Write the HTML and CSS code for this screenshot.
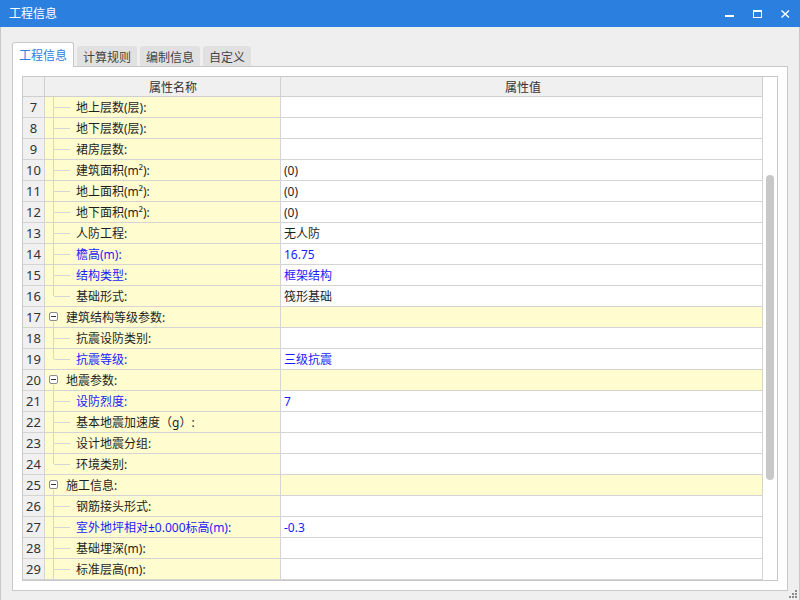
FILE: index.html
```html
<!DOCTYPE html>
<html lang="zh">
<head>
<meta charset="utf-8">
<link rel="stylesheet" href="styles.css">
</head>
<body>
<div class="window">
  <div class="titlebar">
    <span class="title">工程信息</span>
    <div class="controls">
      <span class="ctl"><svg width="10" height="8" viewBox="0 0 10 8"><rect x="0" y="5" width="9" height="2" fill="#fff"/></svg></span>
      <span class="ctl"><svg width="10" height="8" viewBox="0 0 10 8"><rect x="0.5" y="0.5" width="8" height="7" fill="none" stroke="#fff"/><rect x="0" y="0" width="9" height="2" fill="#fff"/></svg></span>
      <span class="ctl"><svg width="10" height="8" viewBox="0 0 10 8"><path d="M0.5 0.5 L8 7.5 M8 0.5 L0.5 7.5" stroke="#fff" stroke-width="1.4" fill="none"/></svg></span>
    </div>
  </div>
  <div class="client">
    <div class="tabs">
      <div class="tab active">工程信息</div>
      <div class="tab w60">计算规则</div>
      <div class="tab w60">编制信息</div>
      <div class="tab w48">自定义</div>
    </div>
    <div class="panel">
      <div class="grid">
        <div class="table">
          <div class="row head">
            <div class="num"></div>
            <div class="name">属性名称</div>
            <div class="val">属性值</div>
          </div>
          <div class="row"><div class="num">7</div><div class="name child">地上层数(层):</div><div class="val"></div></div>
          <div class="row"><div class="num">8</div><div class="name child">地下层数(层):</div><div class="val"></div></div>
          <div class="row"><div class="num">9</div><div class="name child">裙房层数:</div><div class="val"></div></div>
          <div class="row"><div class="num">10</div><div class="name child">建筑面积(m²):</div><div class="val">(0)</div></div>
          <div class="row"><div class="num">11</div><div class="name child">地上面积(m²):</div><div class="val">(0)</div></div>
          <div class="row"><div class="num">12</div><div class="name child">地下面积(m²):</div><div class="val">(0)</div></div>
          <div class="row"><div class="num">13</div><div class="name child">人防工程:</div><div class="val">无人防</div></div>
          <div class="row"><div class="num">14</div><div class="name child blue">檐高(m):</div><div class="val blue">16.75</div></div>
          <div class="row"><div class="num">15</div><div class="name child blue">结构类型:</div><div class="val blue">框架结构</div></div>
          <div class="row"><div class="num">16</div><div class="name child last">基础形式:</div><div class="val">筏形基础</div></div>
          <div class="row group"><div class="num">17</div><div class="name"><span class="box"></span>建筑结构等级参数:</div><div class="val"></div></div>
          <div class="row"><div class="num">18</div><div class="name child">抗震设防类别:</div><div class="val"></div></div>
          <div class="row"><div class="num">19</div><div class="name child last blue">抗震等级:</div><div class="val blue">三级抗震</div></div>
          <div class="row group"><div class="num">20</div><div class="name"><span class="box"></span>地震参数:</div><div class="val"></div></div>
          <div class="row"><div class="num">21</div><div class="name child blue">设防烈度:</div><div class="val blue">7</div></div>
          <div class="row"><div class="num">22</div><div class="name child">基本地震加速度（g）:</div><div class="val"></div></div>
          <div class="row"><div class="num">23</div><div class="name child">设计地震分组:</div><div class="val"></div></div>
          <div class="row"><div class="num">24</div><div class="name child last">环境类别:</div><div class="val"></div></div>
          <div class="row group"><div class="num">25</div><div class="name"><span class="box"></span>施工信息:</div><div class="val"></div></div>
          <div class="row"><div class="num">26</div><div class="name child">钢筋接头形式:</div><div class="val"></div></div>
          <div class="row"><div class="num">27</div><div class="name child blue">室外地坪相对±0.000标高(m):</div><div class="val blue">-0.3</div></div>
          <div class="row"><div class="num">28</div><div class="name child">基础埋深(m):</div><div class="val"></div></div>
          <div class="row"><div class="num">29</div><div class="name child">标准层高(m):</div><div class="val"></div></div>
        </div>
        <div class="scroll"><div class="thumb"></div></div>
      </div>
    </div>
  </div>
  <svg class="grip" width="10" height="10" viewBox="0 0 10 10">
    <rect x="7" y="1" width="2" height="2" fill="#8a8a8a"/>
    <rect x="4" y="4" width="2" height="2" fill="#8a8a8a"/>
    <rect x="7" y="4" width="2" height="2" fill="#8a8a8a"/>
    <rect x="1" y="7" width="2" height="2" fill="#8a8a8a"/>
    <rect x="4" y="7" width="2" height="2" fill="#8a8a8a"/>
    <rect x="7" y="7" width="2" height="2" fill="#8a8a8a"/>
  </svg>
</div>
</body>
</html>
```
FILE: styles.css
```css
* { box-sizing: border-box; }
body { margin: 0; background: #efefef; }
.window {
  position: relative;
  width: 800px;
  height: 600px;
  display: flex;
  flex-direction: column;
  font-family: "Noto Sans", "Noto Sans CJK SC", sans-serif;
  font-size: 12px;
  color: #1e1e1e;
  background: #efefef;
}
.titlebar {
  height: 27px;
  flex: none;
  background: #2b80df;
  display: flex;
  align-items: center;
  justify-content: space-between;
  padding-left: 9px;
}
.title { color: #fff; font-size: 12px; line-height: 16px; }
.controls { display: flex; height: 27px; }
.ctl {
  width: 28px;
  height: 27px;
  display: flex;
  align-items: center;
  justify-content: center;
}
.client {
  flex: 1;
  display: flex;
  flex-direction: column;
  border: 1px solid #c6c9cc;
  border-top: 0;
  padding: 15px 11px 11px 11px;
}
.tabs {
  height: 24px;
  flex: none;
  display: flex;
  align-items: flex-end;
  gap: 3px;
  position: relative;
  z-index: 1;
}
.tab {
  height: 20px;
  background: #e1e1e1;
  color: #444;
  border-radius: 3px 3px 0 0;
  display: flex;
  align-items: center;
  justify-content: center;
  font-size: 12px;
  padding-top: 2px;
}
.tab.active {
  width: 62px;
  height: 25px;
  margin-bottom: -1px;
  background: #fff;
  color: #2b80df;
  border: 1px solid #c8c8c8;
  border-bottom: 0;
  padding-top: 0;
  padding-bottom: 1px;
}
.w60 { width: 60px; }
.w48 { width: 48px; }
.panel {
  flex: 1;
  background: #fff;
  border: 1px solid #c8c8c8;
  padding: 9px;
  display: flex;
}
.grid {
  flex: 1;
  border: 1px solid #c8c8c8;
  display: flex;
  overflow: hidden;
}
.table {
  width: 740px;
  flex: none;
  overflow: hidden;
}
.row {
  display: grid;
  grid-template-columns: 22px 236px 482px;
  height: 21px;
}
.row > div {
  border-right: 1px solid #d4d4d4;
  border-bottom: 1px solid #d4d4d4;
  display: flex;
  align-items: center;
  white-space: nowrap;
}
.row.head { height: 20px; }
.row.head > div {
  background: #f0f0f0;
  justify-content: center;
  color: #333;
  border-color: #cfcfcf;
}
.num {
  background: #f0f0f0;
  justify-content: center;
  color: #333;
  font-size: 13px;
}
.name {
  background: #fffcd0;
  position: relative;
  padding-left: 21px;
}
.name.child { padding-left: 31px; }
.val { padding-left: 3px; background: #fff; }
.group .val { background: #fffcd0; }
.blue { color: #1a1aff; }
.name.child::before {
  content: "";
  position: absolute;
  left: 8px;
  top: 0;
  bottom: -1px;
  border-left: 1px solid #d6d6d6;
}
.name.child.last::before { bottom: 50%; }
.name.child::after {
  content: "";
  position: absolute;
  left: 9px;
  width: 16px;
  top: 10px;
  border-top: 1px solid #d6d6d6;
}
.group .name::after {
  content: "";
  position: absolute;
  left: 8px;
  top: 15px;
  bottom: -1px;
  border-left: 1px solid #d6d6d6;
}
.box {
  position: absolute;
  left: 4px;
  top: 5px;
  width: 9px;
  height: 9px;
  border: 1px solid #8c8c8c;
  border-radius: 2px;
  background: #fff;
}
.box::before {
  content: "";
  position: absolute;
  left: 1px;
  right: 1px;
  top: 3px;
  border-top: 1px solid #333;
}
.scroll {
  width: 15px;
  flex: none;
  background: #fff;
}
.thumb {
  margin-top: 98px;
  margin-left: 3px;
  width: 8px;
  height: 305px;
  border-radius: 4px;
  background: #c8c8c8;
}
.grip {
  position: absolute;
  right: 2px;
  bottom: 1px;
}
```
